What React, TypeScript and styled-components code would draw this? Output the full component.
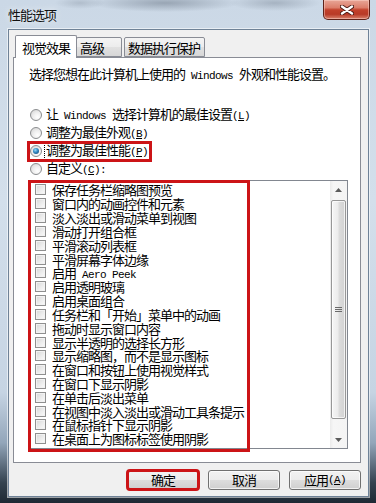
import React from "react";
import styled, { createGlobalStyle, css } from "styled-components";

const GlobalStyle = createGlobalStyle`
  html, body { margin: 0; padding: 0; background: #ffffff; }
  body {
    font-family: "Noto Sans CJK SC", "Liberation Sans", sans-serif;
    font-size: 13px;
    letter-spacing: -1px;
    color: #000;
  }
  * { box-sizing: border-box; }
`;

const RED = "#cc1417";

const Window = styled.div`
  width: 376px;
  height: 503px;
  display: flex;
  flex-direction: column;
  padding: 0 7px 6px 8px;
  background:
    radial-gradient(ellipse 75px 9px at 165px 3px, rgba(70, 82, 98, 0.38), rgba(70, 82, 98, 0) 100%),
    radial-gradient(ellipse 45px 8px at 275px 3px, rgba(70, 82, 98, 0.28), rgba(70, 82, 98, 0) 100%),
    radial-gradient(ellipse 25px 6px at 80px 3px, rgba(70, 82, 98, 0.2), rgba(70, 82, 98, 0) 100%),
    linear-gradient(to bottom, #cbd8e6 0%, #d3dfeb 40%, #c6d4e3 78%, #93a6ba 88%, #34424f 96%, #1e2934 100%);
`;

const TitleBar = styled.div`
  height: 29px;
  flex: none;
  display: flex;
  align-items: flex-start;
`;

const Title = styled.div`
  padding-top: 8px;
  line-height: 14px;
  color: #111;
  text-shadow: 0 0 6px rgba(255, 255, 255, 0.9);
`;

const CloseButton = styled.div`
  margin-left: auto;
  margin-right: -1px;
  width: 47px;
  height: 20px;
  border: 1px solid #5e2219;
  border-top: none;
  border-radius: 0 0 5px 5px;
  background: linear-gradient(to bottom, #e8a697 0%, #dc7e6b 40%, #c2412b 52%, #b83a26 75%, #d9826d 100%);
  box-shadow: inset 0 0 0 1px rgba(255, 220, 210, 0.45);
  display: flex;
  align-items: center;
  justify-content: center;
`;

const Client = styled.div`
  flex: 1;
  display: flex;
  flex-direction: column;
  background: #f0f0f0;
  border: 1px solid #6f8297;
  box-shadow: 0 0 0 1px rgba(255, 255, 255, 0.55);
  padding: 5px 7px 6px 4px;
`;

const TabStrip = styled.div`
  display: flex;
  align-items: flex-end;
  padding-left: 2px;
  margin-bottom: -1px;
  position: relative;
  z-index: 1;
`;

const Tab = styled.div<{ $active?: boolean; $w: number; $gap?: number }>`
  width: ${(p) => p.$w}px;
  margin-left: ${(p) => p.$gap ?? 0}px;
  display: flex;
  align-items: center;
  line-height: 14px;
  border: 1px solid #898c95;
  border-radius: 2px 2px 0 0;
  white-space: nowrap;
  ${(p) =>
    p.$active
      ? css`
          height: 23px;
          background: #ffffff;
          border-bottom: none;
          justify-content: center;
          padding-top: 2px;
        `
      : css`
          height: 20px;
          margin-bottom: 1px;
          padding-left: 3px;
          padding-top: 1px;
          background: linear-gradient(to bottom, #f4f4f4 0%, #ececec 50%, #e1e1e1 51%, #d7d7d7 100%);
        `}
`;

const Panel = styled.div`
  flex: 1;
  display: flex;
  flex-direction: column;
  background: #ffffff;
  border: 1px solid #898c95;
  padding: 9px 12px 0 16px;
`;

const Description = styled.div`
  line-height: 14px;
  margin-left: -1px;
  white-space: nowrap;
`;

const Latin = styled.span`
  font-family: "Liberation Mono", "DejaVu Sans Mono", monospace;
  font-size: 11px;
  letter-spacing: -0.6px;
  white-space: pre;
`;

const RadioGroup = styled.div`
  margin-top: 23px;
  display: flex;
  flex-direction: column;
`;

const RadioRow = styled.div<{ $marked?: boolean }>`
  height: 18px;
  display: flex;
  align-items: center;
  gap: 2px;
  align-self: flex-start;
  position: relative;
  ${(p) =>
    p.$marked &&
    css`
      &::after {
        content: "";
        position: absolute;
        left: -3px;
        right: -2px;
        top: -1px;
        bottom: -2px;
        border: 3px solid ${RED};
        pointer-events: none;
      }
    `}
`;

const RadioCircle = styled.span<{ $checked?: boolean }>`
  width: 12px;
  height: 12px;
  flex: none;
  border-radius: 50%;
  border: 1px solid #8b8d8f;
  background: radial-gradient(circle at 65% 70%, #ffffff 0%, #eeeeee 45%, #cfcfcf 100%);
  display: flex;
  align-items: center;
  justify-content: center;
  ${(p) =>
    p.$checked &&
    css`
      &::after {
        content: "";
        width: 6px;
        height: 6px;
        border-radius: 50%;
        background: radial-gradient(circle at 40% 35%, #9adaf8 0%, #2f86c0 45%, #0c3b66 100%);
      }
    `}
`;

const RadioLabel = styled.span<{ $focused?: boolean }>`
  line-height: 14px;
  padding: 0 1px;
  border: 1px ${(p) => (p.$focused ? "dotted #000" : "solid transparent")};
  white-space: nowrap;
`;

const ListBox = styled.div`
  margin-top: 2px;
  height: 269px;
  display: flex;
  position: relative;
  border: 1px solid #828790;
  background: #ffffff;
`;

const ListMark = styled.div`
  position: absolute;
  left: -3px;
  top: -1px;
  width: 222px;
  height: 272px;
  border: 3px solid ${RED};
  pointer-events: none;
  z-index: 2;
`;

const Items = styled.div`
  flex: 1;
  overflow: hidden;
  padding: 2px 0 0 4px;
  display: flex;
  flex-direction: column;
`;

const Item = styled.div`
  height: 13.84px;
  display: flex;
  align-items: center;
  gap: 6px;
  white-space: nowrap;
`;

const ItemText = styled.span`
  display: block;
  line-height: 13px;
  height: 13px;
`;

const CheckBox = styled.span`
  width: 11px;
  height: 11px;
  flex: none;
  border: 1px solid #8f8f8f;
  background: linear-gradient(135deg, #d6d6d6 0%, #ececec 55%, #fbfbfb 100%);
  box-shadow: inset 0 0 0 1px #f2f2f2;
`;

const ScrollBar = styled.div`
  width: 17px;
  flex: none;
  display: flex;
  flex-direction: column;
  background: linear-gradient(to right, #ebebeb 0%, #f6f6f6 20%, #f4f4f4 100%);
`;

const ScrollArrow = styled.div`
  height: 17px;
  flex: none;
  display: flex;
  align-items: center;
  justify-content: center;
`;

const Track = styled.div`
  flex: 1;
  display: flex;
  flex-direction: column;
`;

const Thumb = styled.div`
  margin: 2px 1px 0 1px;
  height: 219px;
  border: 1px solid #979797;
  border-radius: 2px;
  background: linear-gradient(to right, #f6f6f6 0%, #ececec 45%, #dcdcdc 55%, #d2d2d2 100%);
  box-shadow: inset 0 0 0 1px rgba(255, 255, 255, 0.7);
  display: flex;
  align-items: center;
  justify-content: center;
`;

const ButtonRow = styled.div`
  margin-top: 7px;
  display: flex;
  justify-content: flex-end;
  gap: 9px;
`;

const Button = styled.div<{ $marked?: boolean }>`
  width: 72px;
  height: 20px;
  display: flex;
  align-items: center;
  justify-content: center;
  line-height: 14px;
  border: 1px solid #707070;
  border-radius: 3px;
  background: linear-gradient(to bottom, #f2f2f2 0%, #ebebeb 50%, #dddddd 51%, #cfcfcf 100%);
  box-shadow: inset 0 0 0 1px rgba(255, 255, 255, 0.7);
  white-space: nowrap;
  ${(p) =>
    p.$marked &&
    css`
      outline: 3px solid ${RED};
      outline-offset: -2px;
    `}
`;

const items: React.ReactNode[] = [
  "保存任务栏缩略图预览",
  "窗口内的动画控件和元素",
  "淡入淡出或滑动菜单到视图",
  "滑动打开组合框",
  "平滑滚动列表框",
  "平滑屏幕字体边缘",
  <>
    启用<Latin> Aero Peek</Latin>
  </>,
  "启用透明玻璃",
  "启用桌面组合",
  "任务栏和「开始」菜单中的动画",
  "拖动时显示窗口内容",
  "显示半透明的选择长方形",
  "显示缩略图，而不是显示图标",
  "在窗口和按钮上使用视觉样式",
  "在窗口下显示阴影",
  "在单击后淡出菜单",
  "在视图中淡入淡出或滑动工具条提示",
  "在鼠标指针下显示阴影",
  "在桌面上为图标标签使用阴影",
];

const Key = ({ k }: { k: string }) => (
  <Latin>
    (<u>{k}</u>)
  </Latin>
);

export default function App() {
  return (
    <>
      <GlobalStyle />
      <Window>
        <TitleBar>
          <Title>性能选项</Title>
          <CloseButton>
            <svg width="14" height="10" viewBox="0 0 14 10">
              <path d="M2 1.5 L12 8.5 M12 1.5 L2 8.5" stroke="#4a1a14" strokeWidth="4.2" strokeLinecap="round" />
              <path d="M2 1.5 L12 8.5 M12 1.5 L2 8.5" stroke="#ffffff" strokeWidth="2.4" strokeLinecap="round" />
            </svg>
          </CloseButton>
        </TitleBar>
        <Client>
          <TabStrip>
            <Tab $active $w={62}>视觉效果</Tab>
            <Tab $w={46} $gap={-1}>高级</Tab>
            <Tab $w={81} $gap={2}>数据执行保护</Tab>
          </TabStrip>
          <Panel>
            <Description>
              选择您想在此计算机上使用的<Latin> Windows </Latin>外观和性能设置。
            </Description>
            <RadioGroup>
              <RadioRow>
                <RadioCircle />
                <RadioLabel>
                  让<Latin> Windows </Latin>选择计算机的最佳设置<Key k="L" />
                </RadioLabel>
              </RadioRow>
              <RadioRow>
                <RadioCircle />
                <RadioLabel>
                  调整为最佳外观<Key k="B" />
                </RadioLabel>
              </RadioRow>
              <RadioRow $marked>
                <RadioCircle $checked />
                <RadioLabel $focused>
                  调整为最佳性能<Key k="P" />
                </RadioLabel>
              </RadioRow>
              <RadioRow>
                <RadioCircle />
                <RadioLabel>
                  自定义<Key k="C" />
                  <Latin>:</Latin>
                </RadioLabel>
              </RadioRow>
            </RadioGroup>
            <ListBox>
              <ListMark />
              <Items>
                {items.map((it, i) => (
                  <Item key={i}>
                    <CheckBox />
                    <ItemText>{it}</ItemText>
                  </Item>
                ))}
              </Items>
              <ScrollBar>
                <ScrollArrow>
                  <svg width="7" height="4" viewBox="0 0 7 4">
                    <path d="M0 4 L3.5 0 L7 4 Z" fill="#5b5b5b" />
                  </svg>
                </ScrollArrow>
                <Track>
                  <Thumb>
                    <svg width="7" height="7" viewBox="0 0 7 7">
                      <path d="M0 1.5 H7 M0 3.5 H7 M0 5.5 H7" stroke="#6a6a6a" strokeWidth="1" />
                    </svg>
                  </Thumb>
                </Track>
                <ScrollArrow>
                  <svg width="7" height="4" viewBox="0 0 7 4">
                    <path d="M0 0 L3.5 4 L7 0 Z" fill="#5b5b5b" />
                  </svg>
                </ScrollArrow>
              </ScrollBar>
            </ListBox>
          </Panel>
          <ButtonRow>
            <Button $marked>确定</Button>
            <Button>取消</Button>
            <Button>
              应用<Key k="A" />
            </Button>
          </ButtonRow>
        </Client>
      </Window>
    </>
  );
}
